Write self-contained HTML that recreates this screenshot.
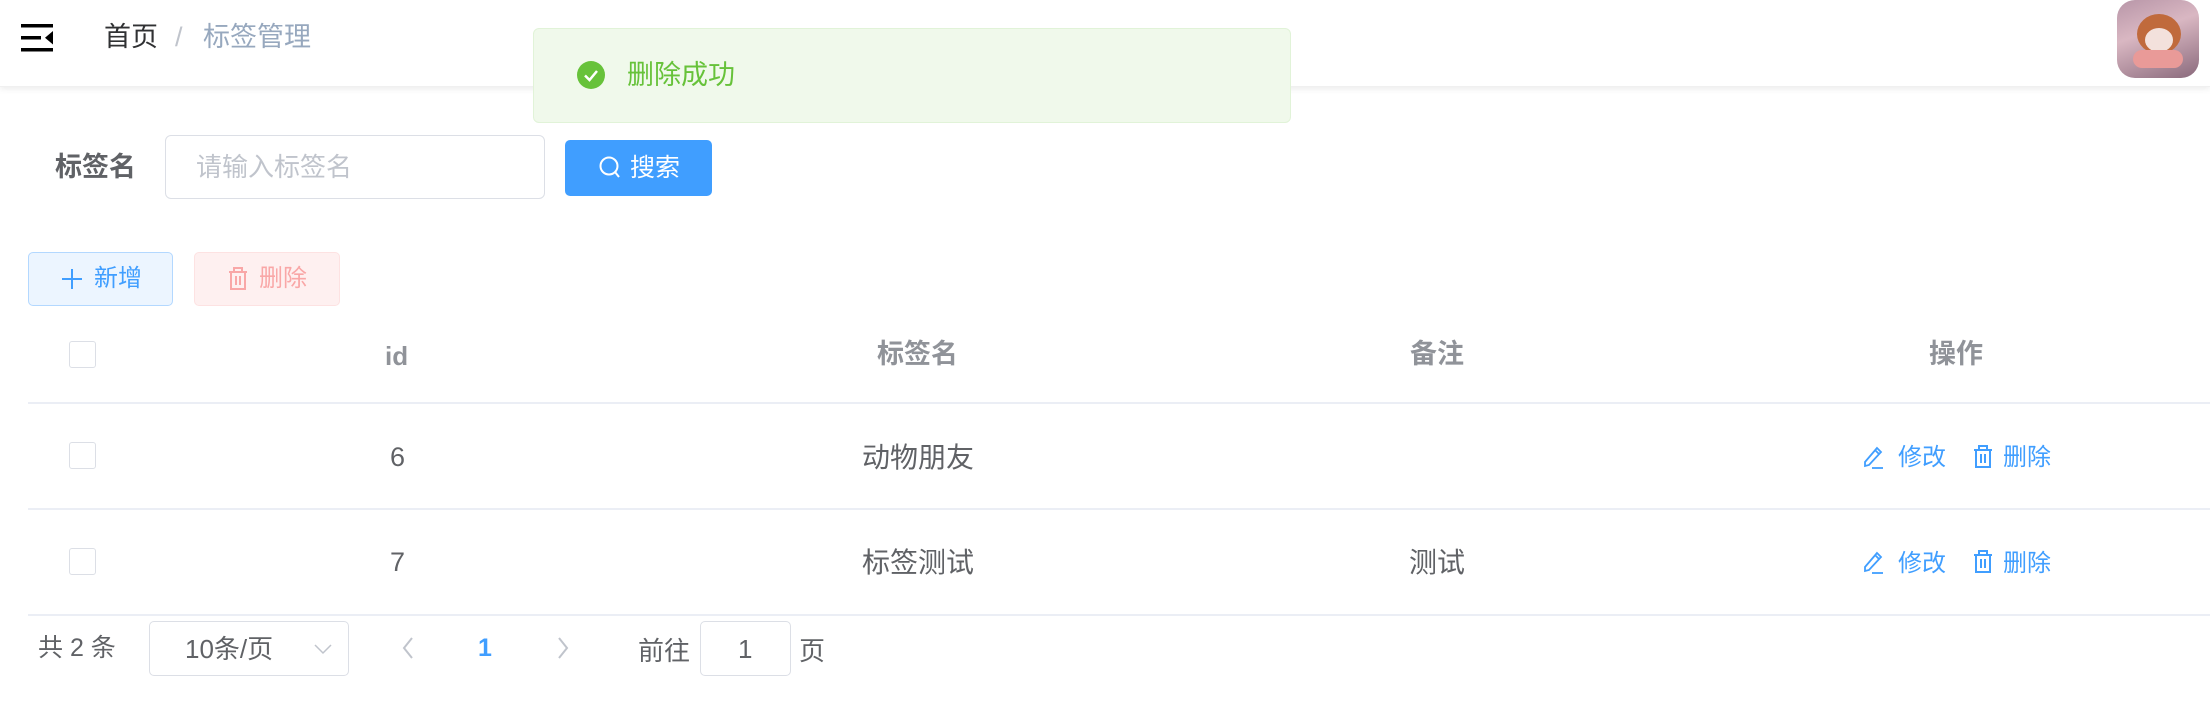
<!DOCTYPE html>
<html><head><meta charset="utf-8"><style>
*{box-sizing:border-box;margin:0;padding:0}
body{width:2210px;height:703px;overflow:hidden;background:#fff;font-family:"Liberation Sans","Noto Sans CJK SC",sans-serif;color:#606266;position:relative}
.a{position:absolute}
.t{font-size:27px;line-height:1;white-space:nowrap}
.cb{position:absolute;width:27px;height:27px;border:1.5px solid #dcdfe6;border-radius:3px;background:#fff}
.line{position:absolute;left:28px;right:0;height:2px;background:#ebeef5}
.blue{color:#409eff}
</style></head><body>
<div class="a" style="left:0;top:0;width:2210px;height:87px;box-shadow:0 2px 6px rgba(0,0,0,.08);border-bottom:1px solid #f0f0f0"></div>
<svg class="a" style="left:21px;top:23px" width="34" height="30" viewBox="0 0 34 30"><g fill="#000"><rect x="0" y="1" width="32" height="3.5"/><rect x="0" y="13" width="20" height="3.5"/><rect x="0" y="25" width="32" height="3.5"/><path d="M32 8 L24 14.8 L32 21.5 Z"/></g></svg>
<div class="a t" style="left:104px;top:24px;color:#303133">首页</div>
<div class="a t" style="left:175px;top:24px;color:#c0c4cc">/</div>
<div class="a t" style="left:203px;top:24px;color:#97a8be">标签管理</div>
<div class="a" style="left:2117px;top:0;width:82px;height:78px;border-radius:18px;background:linear-gradient(160deg,#b896a8,#d9b7c2 40%,#8a6a7c);overflow:hidden">
<div class="a" style="left:20px;top:14px;width:44px;height:40px;border-radius:50%;background:#c06a3c"></div>
<div class="a" style="left:28px;top:28px;width:28px;height:24px;border-radius:50%;background:#f3e1dc"></div>
<div class="a" style="left:16px;top:50px;width:50px;height:18px;border-radius:9px;background:#e99a98"></div>
</div>
<div class="a" style="left:533px;top:28px;width:758px;height:95px;background:#f0f9eb;border:1.5px solid #e1f3d8;border-radius:6px"></div>
<svg class="a" style="left:577px;top:61px" width="28" height="28" viewBox="0 0 28 28"><circle cx="14" cy="14" r="14" fill="#67c23a"/><path d="M8 14.5 L12.5 19 L20 10" stroke="#fff" stroke-width="2.5" fill="none"/></svg>
<div class="a t" style="left:627px;top:62px;color:#67c23a">删除成功</div>
<div class="a t" style="left:55px;top:154px;font-weight:bold;color:#606266">标签名</div>
<div class="a" style="left:165px;top:135px;width:380px;height:64px;border:1.5px solid #dcdfe6;border-radius:6px"></div>
<div class="a t" style="left:196px;top:154px;color:#c0c4cc;font-size:26px">请输入标签名</div>
<div class="a" style="left:565px;top:140px;width:147px;height:56px;background:#409eff;border-radius:5px"></div>
<svg class="a" style="left:598px;top:155px" width="24" height="26" viewBox="0 0 24 26"><circle cx="11" cy="11" r="8.5" stroke="#fff" stroke-width="2" fill="none"/><path d="M17 17 L21 22" stroke="#fff" stroke-width="2"/></svg>
<div class="a t" style="left:630px;top:156px;color:#fff;font-size:25px">搜索</div>
<div class="a" style="left:28px;top:252px;width:145px;height:54px;background:#ecf5ff;border:1.5px solid #b3d8ff;border-radius:5px"></div>
<svg class="a" style="left:62px;top:269px" width="20" height="20"><path d="M10 0V20M0 10H20" stroke="#409eff" stroke-width="2"/></svg>
<div class="a t blue" style="left:94px;top:267px;font-size:24px">新增</div>
<div class="a" style="left:194px;top:252px;width:146px;height:54px;background:#fef0f0;border:1.5px solid #fde2e2;border-radius:5px"></div>
<svg class="a" style="left:228px;top:267px" width="20" height="24" viewBox="0 0 20 24"><g stroke="#f9a7a7" stroke-width="2" fill="none"><path d="M1 5H19M6 5V1H14V5M3 5V22H17V5M8 9V18M12 9V18"/></g></svg>
<div class="a t" style="left:259px;top:267px;font-size:24px;color:#f9a7a7">删除</div>
<div class="cb" style="left:69px;top:341px"></div>
<div class="a t" style="left:385px;top:343px;font-weight:bold;color:#909399;font-size:26px">id</div>
<div class="a t" style="left:877px;top:341px;font-weight:bold;color:#909399">标签名</div>
<div class="a t" style="left:1410px;top:341px;font-weight:bold;color:#909399">备注</div>
<div class="a t" style="left:1929px;top:341px;font-weight:bold;color:#909399">操作</div>
<div class="line" style="top:402px"></div>
<div class="cb" style="left:69px;top:442px"></div>
<div class="a t" style="left:390px;top:444px">6</div>
<div class="a t" style="left:862px;top:444px;font-size:28px">动物朋友</div>
<div class="line" style="top:508px"></div>
<div class="cb" style="left:69px;top:548px"></div>
<div class="a t" style="left:390px;top:549px">7</div>
<div class="a t" style="left:862px;top:549px;font-size:28px">标签测试</div>
<div class="a t" style="left:1409px;top:549px;font-size:28px">测试</div>
<div class="line" style="top:614px"></div>
<svg class="a" style="left:1863px;top:446px" width="22" height="24" viewBox="0 0 22 24"><g stroke="#409eff" stroke-width="1.8" fill="none"><path d="M14 2 L18 6 L6 19 L2 20 L2 16 Z M12 4 L16 8"/><path d="M9 22H20"/></g></svg>
<div class="a t blue" style="left:1898px;top:446px;font-size:24px">修改</div>
<svg class="a" style="left:1973px;top:445px" width="20" height="24" viewBox="0 0 20 24"><g stroke="#409eff" stroke-width="2" fill="none"><path d="M1 5H19M6 5V1H14V5M3 5V22H17V5M8 9V18M12 9V18"/></g></svg>
<div class="a t blue" style="left:2003px;top:446px;font-size:24px">删除</div>
<svg class="a" style="left:1863px;top:551px" width="22" height="24" viewBox="0 0 22 24"><g stroke="#409eff" stroke-width="1.8" fill="none"><path d="M14 2 L18 6 L6 19 L2 20 L2 16 Z M12 4 L16 8"/><path d="M9 22H20"/></g></svg>
<div class="a t blue" style="left:1898px;top:552px;font-size:24px">修改</div>
<svg class="a" style="left:1973px;top:550px" width="20" height="24" viewBox="0 0 20 24"><g stroke="#409eff" stroke-width="2" fill="none"><path d="M1 5H19M6 5V1H14V5M3 5V22H17V5M8 9V18M12 9V18"/></g></svg>
<div class="a t blue" style="left:2003px;top:552px;font-size:24px">删除</div>
<div class="a t" style="left:38px;top:636px;font-size:25px">共 2 条</div>
<div class="a" style="left:149px;top:621px;width:200px;height:55px;border:1.5px solid #dcdfe6;border-radius:5px"></div>
<div class="a t" style="left:185px;top:636px;font-size:26px">10条/页</div>
<svg class="a" style="left:314px;top:643px" width="18" height="12"><path d="M1 2 L9 10 L17 2" stroke="#c0c4cc" stroke-width="1.5" fill="none"/></svg>
<svg class="a" style="left:401px;top:636px" width="14" height="24"><path d="M11 2 L3 12 L11 22" stroke="#c0c4cc" stroke-width="2" fill="none"/></svg>
<div class="a t blue" style="left:478px;top:636px;font-weight:bold;font-size:25px">1</div>
<svg class="a" style="left:556px;top:636px" width="14" height="24"><path d="M3 2 L11 12 L3 22" stroke="#c0c4cc" stroke-width="2" fill="none"/></svg>
<div class="a t" style="left:638px;top:638px;font-size:26px">前往</div>
<div class="a" style="left:700px;top:621px;width:91px;height:55px;border:1.5px solid #dcdfe6;border-radius:5px"></div>
<div class="a t" style="left:738px;top:636px;font-size:26px">1</div>
<div class="a t" style="left:799px;top:638px;font-size:26px">页</div>
</body></html>
